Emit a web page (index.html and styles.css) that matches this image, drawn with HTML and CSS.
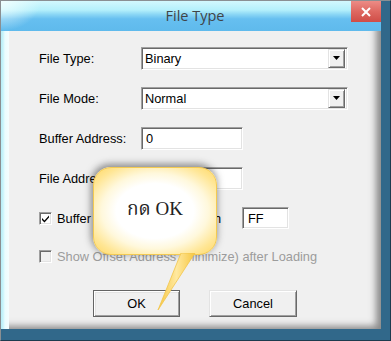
FILE: index.html
```html
<!DOCTYPE html>
<html>
<head>
<meta charset="utf-8">
<link rel="stylesheet" href="styles.css">
</head>
<body>
<div class="window">
  <div class="titlebar">
    <div class="title">File Type</div>
    <div class="close">
      <svg width="12" height="10" viewBox="0 0 12 10"><path d="M2 1 L10 9 M10 1 L2 9" stroke="#fff" stroke-width="2" fill="none"/></svg>
    </div>
  </div>
  <div class="frame">
    <div class="leftedge"></div>
    <div class="bevel">
      <div class="client">
        <div class="row">
          <span class="lbl">File Type:</span>
          <div class="combo"><span class="val">Binary</span><span class="drop"><svg width="7" height="4" viewBox="0 0 7 4"><path d="M0 0H7L3.5 4Z" fill="#000"/></svg></span></div>
        </div>
        <div class="row">
          <span class="lbl">File Mode:</span>
          <div class="combo"><span class="val">Normal</span><span class="drop"><svg width="7" height="4" viewBox="0 0 7 4"><path d="M0 0H7L3.5 4Z" fill="#000"/></svg></span></div>
        </div>
        <div class="row">
          <span class="lbl">Buffer Address:</span>
          <div class="edit">0</div>
        </div>
        <div class="row">
          <span class="lbl">File Address:</span>
          <div class="edit"></div>
        </div>
        <div class="row">
          <label class="check wide"><span class="box"><svg width="9" height="9" viewBox="0 0 9 9"><path d="M1 4 L3.5 6.5 L8 1.5 L8 3.5 L3.5 8.5 L1 6Z" fill="#000"/></svg></span><span>Buffer Fill Unused Areas with</span></label>
          <div class="edit small">FF</div>
        </div>
        <div class="row last">
          <label class="check disabled"><span class="box"></span><span>Show Offset Address (Minimize) after Loading</span></label>
        </div>
        <div class="buttons">
          <div class="btn default">OK</div>
          <div class="btn">Cancel</div>
        </div>
      </div>
    </div>
  </div>
</div>
<div class="callout">กด OK</div>
<svg class="tail" width="60" height="60" viewBox="0 0 60 60">
  <defs>
    <linearGradient id="tg" x1="0" y1="0" x2="1" y2="0">
      <stop offset="0" stop-color="#f6c640"/>
      <stop offset="0.5" stop-color="#ffe9a0"/>
      <stop offset="1" stop-color="#f6c640"/>
    </linearGradient>
  </defs>
  <path d="M31 0 L45 0 L8 57 Z" fill="url(#tg)" stroke="#f2c54a" stroke-width="0.8"/>
</svg>
</body>
</html>
```
FILE: styles.css
```css
html, body {
  margin: 0;
  padding: 0;
  background: #ffffff;
}
body {
  width: 391px;
  height: 341px;
  overflow: hidden;
  position: relative;
  font-family: "Liberation Sans", Arial, sans-serif;
  font-size: 12.8px;
  color: #000;
}
.window {
  width: 391px;
  height: 341px;
  box-sizing: border-box;
  border-left: 1px solid #8a8f92;
  border-top: 1px solid #8a8f92;
  border-right: 1px solid #1d3b4e;
  border-bottom: 1px solid #1d3b4e;
  background: #31688a;
  display: flex;
  flex-direction: column;
}
.titlebar {
  width: 380px;
  height: 30px;
  flex: none;
  display: flex;
  align-items: flex-start;
  justify-content: center;
  position: relative;
  background:
    radial-gradient(ellipse 40px 30px at 0 0, rgba(240,255,255,0.95), rgba(200,250,255,0) 100%),
    linear-gradient(to bottom, #d2f8fd 0%, #b4f0fb 30%, #8ad6f5 45%, #66bff0 60%, #5fbaec 100%);
}
.title {
  font-family: "Open Sans", "Noto Sans", sans-serif;
  font-size: 14.5px;
  color: #404448;
  line-height: 30px;
  margin-left: 8px;
}
.close {
  position: absolute;
  right: 0;
  top: 0;
  width: 30px;
  height: 21px;
  display: flex;
  align-items: center;
  justify-content: center;
  background: linear-gradient(to bottom, #ec8c86 0%, #de6861 50%, #cf4d47 100%);
}
.frame {
  flex: 1;
  display: flex;
  padding: 0 9px 11px 0;
}
.leftedge {
  width: 8px;
  flex: none;
  background: linear-gradient(to right, #b6eef8 0px, #c8f4fb 2px, #eafcfe 4px, #f4fdfe 8px);
}
.bevel {
  flex: 1;
  background: #f0f0f0;
  box-shadow: inset -9px -7px 7px -4px rgba(70,70,70,0.6);
}
.client {
  padding: 7px 0 0 30px;
  display: flex;
  flex-direction: column;
}
.row {
  height: 40px;
  display: flex;
  align-items: center;
}
.row.last {
  height: 36px;
}
.lbl {
  width: 102px;
  flex: none;
}
.combo, .edit {
  box-sizing: border-box;
  height: 23px;
  background: #fff;
  border: 1px solid;
  border-color: #a0a0a0 #ffffff #ffffff #a0a0a0;
  box-shadow: inset 1px 1px #696969, inset -1px -1px #e3e3e3;
  display: flex;
  align-items: center;
}
.combo {
  width: 207px;
  padding: 0 2px 0 3px;
  justify-content: space-between;
}
.edit {
  width: 102px;
  padding-left: 4px;
}
.edit.small {
  width: 47px;
  height: 22px;
  padding-left: 5px;
}
.drop {
  box-sizing: border-box;
  width: 17px;
  height: 19px;
  background: #f0f0f0;
  border: 1px solid;
  border-color: #e3e3e3 #696969 #696969 #e3e3e3;
  box-shadow: inset 1px 1px #ffffff, inset -1px -1px #a0a0a0;
  display: flex;
  align-items: center;
  justify-content: center;
}
.check {
  display: flex;
  align-items: center;
  gap: 5px;
}
.check.wide {
  width: 203px;
  flex: none;
  white-space: nowrap;
  overflow: hidden;
}
.check .box {
  box-sizing: border-box;
  width: 13px;
  height: 13px;
  flex: none;
  background: #fff;
  border: 1px solid;
  border-color: #a0a0a0 #ffffff #ffffff #a0a0a0;
  box-shadow: inset 1px 1px #696969, inset -1px -1px #e3e3e3;
  display: flex;
  align-items: center;
  justify-content: center;
}
.check.disabled {
  color: #9c9c9c;
  white-space: nowrap;
}
.check.disabled .box {
  background: #f0f0f0;
}
.buttons {
  margin-top: 16px;
  padding-left: 54px;
  display: flex;
  gap: 29px;
}
.btn {
  box-sizing: border-box;
  width: 88px;
  height: 27px;
  display: flex;
  align-items: center;
  justify-content: center;
  background: #f0f0f0;
  border: 1px solid;
  border-color: #e3e3e3 #696969 #696969 #e3e3e3;
  box-shadow: inset 1px 1px #ffffff, inset -1px -1px #a0a0a0;
}
.btn.default {
  width: 87px;
  border-color: #646464;
  box-shadow: inset 1px 1px #ffffff, inset -1px -1px #a0a0a0, inset 2px 2px #e3e3e3;
}
.callout {
  position: absolute;
  left: 93px;
  top: 167px;
  width: 124px;
  height: 88px;
  box-sizing: border-box;
  border-radius: 18px;
  border: 1px solid #f3ca52;
  background: radial-gradient(ellipse at 50% 50%, #ffffff 45%, #fff8dc 62%, #ffe695 82%, #ffd865 100%);
  box-shadow: -1px -2px 7px 1px rgba(40,40,40,0.5);
  display: flex;
  align-items: center;
  justify-content: center;
  font-family: "Liberation Serif", "Noto Serif Thai", serif;
  font-size: 19px;
  color: #222;
  padding-bottom: 2px;
}
.tail {
  position: absolute;
  left: 150px;
  top: 253px;
}
```
